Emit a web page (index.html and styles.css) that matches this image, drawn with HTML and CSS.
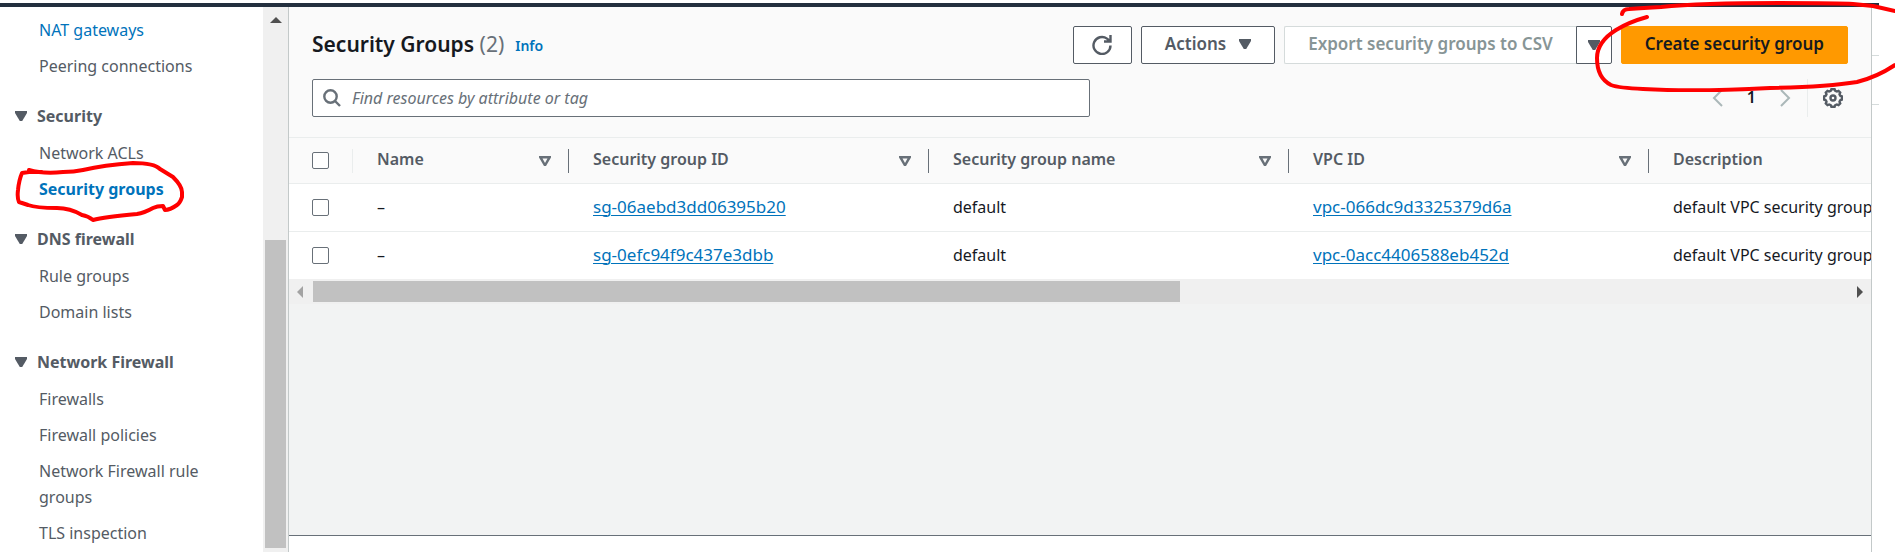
FILE: index.html
```html
<!DOCTYPE html>
<html lang="en">
<head>
<meta charset="utf-8">
<title>Security Groups</title>
<link rel="stylesheet" href="styles.css">
</head>
<body>
<div class="topbar"></div>
<div class="layout">
  <nav class="sidebar" aria-label="VPC navigation">
    <div class="nav-content">
      <ul class="nav-list">
        <li><a class="nav-link visited" href="#">NAT gateways</a></li>
        <li><a class="nav-link" href="#">Peering connections</a></li>
      </ul>
      <section class="nav-group">
        <button class="nav-heading" type="button"><svg class="caret" viewBox="0 0 12 10"><path d="M0 0h12v2L7.200 10H4.800L0 2z"/></svg>Security</button>
        <ul class="nav-list">
          <li><a class="nav-link" href="#">Network ACLs</a></li>
          <li class="marked"><a class="nav-link active" href="#">Security groups</a>
            <svg class="mark mark-nav" viewBox="0 0 170 62"><path d="M15 10Q29 14 49 12Q60 12 69 10Q90 5 119 3Q140 3 146 9L159 17Q168 26 168 32V37Q166 43 163 45Q156 50 151 50L149 46Q143 46 139 48Q130 53 123 54Q90 57 79 60Q74 56 68 55Q56 48 43 48Q22 48 14 45L5 42Q3 38 4 30Q5 20 8 13L15 12L28 12"/></svg>
          </li>
        </ul>
      </section>
      <section class="nav-group">
        <button class="nav-heading" type="button"><svg class="caret" viewBox="0 0 12 10"><path d="M0 0h12v2L7.200 10H4.800L0 2z"/></svg>DNS firewall</button>
        <ul class="nav-list">
          <li><a class="nav-link" href="#">Rule groups</a></li>
          <li><a class="nav-link" href="#">Domain lists</a></li>
        </ul>
      </section>
      <section class="nav-group">
        <button class="nav-heading" type="button"><svg class="caret" viewBox="0 0 12 10"><path d="M0 0h12v2L7.200 10H4.800L0 2z"/></svg>Network Firewall</button>
        <ul class="nav-list">
          <li><a class="nav-link" href="#">Firewalls</a></li>
          <li><a class="nav-link" href="#">Firewall policies</a></li>
          <li><a class="nav-link" href="#">Network Firewall rule groups</a></li>
          <li><a class="nav-link" href="#">TLS inspection</a></li>
        </ul>
      </section>
    </div>
    <div class="vscroll">
      <svg class="arrow-up" viewBox="0 0 12 6"><path d="M0 6L6 0L12 6z"/></svg>
      <div class="vthumb"></div>
    </div>
  </nav>

  <main class="main">
    <header class="panel-header">
      <div class="title-row">
        <h1 class="title">Security Groups <span class="count">(2)</span></h1>
        <a class="info" href="#">Info</a>
        <div class="actions">
          <button class="btn btn-icon" type="button" aria-label="Refresh">
            <svg class="icon" viewBox="0 0 20 20"><path d="M18.500 10.500A8.500 8.500 0 1 1 15 3.600L18 6M18.500 0V6.500H12"/></svg>
          </button>
          <button class="btn btn-actions" type="button">Actions<svg class="caret" viewBox="0 0 12 10"><path d="M0 0h12v2L7.200 10H4.800L0 2z"/></svg></button>
          <div class="split">
            <button class="btn btn-export" type="button" disabled>Export security groups to CSV</button>
            <button class="btn btn-more" type="button" aria-label="More export options"><svg class="caret" viewBox="0 0 12 10"><path d="M0 0h12v2L7.200 10H4.800L0 2z"/></svg></button>
          </div>
          <button class="btn btn-primary" type="button">Create security group</button>
          <svg class="mark mark-create" viewBox="0 0 300 92"><path d="M27 14Q28 9 34 9Q48 8 66 7Q105 3 185 3Q245 3 258 4L278 6L300 11M52 17Q34 22 21 30Q2 42 2 58Q2 78 16 85Q24 88 48 89Q100 92 175 88Q232 87 262 82Q282 77 300 65"/></svg>
        </div>
      </div>
      <div class="filter-row">
        <label class="search">
          <svg class="icon search-icon" viewBox="0 0 18 18"><circle cx="7.500" cy="7.500" r="6.200"/><path d="M12 12L17 17"/></svg>
          <input class="search-input" type="text" placeholder="Find resources by attribute or tag" aria-label="Find resources">
        </label>
        <div class="pager">
          <button class="page-btn" type="button" aria-label="Previous page"><svg viewBox="0 0 11 18"><path d="M10 1L2 9L10 17"/></svg></button>
          <span class="page-num">1</span>
          <button class="page-btn" type="button" aria-label="Next page"><svg viewBox="0 0 11 18"><path d="M1 1L9 9L1 17"/></svg></button>
          <button class="settings" type="button" aria-label="Preferences">
            <svg class="icon" viewBox="0 0 20 20"><path d="M8.400 1.200h3.200l.7 1.700 1.500.6 1.700-.7 1.700 1.700-.7 1.700.6 1.500 1.700.7v3.200l-1.700.7-.6 1.500.7 1.700-1.700 1.700-1.700-.7-1.500.6-.7 1.700H8.400l-.7-1.700-1.500-.6-1.700.7-1.700-1.700.7-1.700-.6-1.500-1.700-.7V8.400l1.700-.7.6-1.500-.7-1.700 1.700-1.700 1.700.7 1.500-.6z"/><circle cx="10" cy="10" r="2.500"/></svg>
          </button>
        </div>
      </div>
    </header>

    <div class="table-wrap">
      <table class="grid">
        <colgroup><col class="col-check"><col class="col-name"><col class="col-wide"><col class="col-wide"><col class="col-wide"><col class="col-wide"></colgroup>
        <thead>
          <tr>
            <th class="check light"><input type="checkbox" aria-label="Select all"></th>
            <th><div class="th"><span>Name</span><svg class="sort" viewBox="0 0 12 10"><path d="M0 0h12v1.500L7 10H5L0 1.500zM3.500 2.600L6 7L8.500 2.600z"/></svg></div></th>
            <th><div class="th"><span>Security group ID</span><svg class="sort" viewBox="0 0 12 10"><path d="M0 0h12v1.500L7 10H5L0 1.500zM3.500 2.600L6 7L8.500 2.600z"/></svg></div></th>
            <th><div class="th"><span>Security group name</span><svg class="sort" viewBox="0 0 12 10"><path d="M0 0h12v1.500L7 10H5L0 1.500zM3.500 2.600L6 7L8.500 2.600z"/></svg></div></th>
            <th><div class="th"><span>VPC ID</span><svg class="sort" viewBox="0 0 12 10"><path d="M0 0h12v1.500L7 10H5L0 1.500zM3.500 2.600L6 7L8.500 2.600z"/></svg></div></th>
            <th><div class="th"><span>Description</span></div></th>
          </tr>
        </thead>
        <tbody>
          <tr>
            <td class="check"><input type="checkbox" aria-label="Select sg-06aebd3dd06395b20"></td>
            <td>–</td>
            <td><a href="#">sg-06aebd3dd06395b20</a></td>
            <td>default</td>
            <td><a href="#">vpc-066dc9d3325379d6a</a></td>
            <td>default VPC security group</td>
          </tr>
          <tr>
            <td class="check"><input type="checkbox" aria-label="Select sg-0efc94f9c437e3dbb"></td>
            <td>–</td>
            <td><a href="#">sg-0efc94f9c437e3dbb</a></td>
            <td>default</td>
            <td><a href="#">vpc-0acc4406588eb452d</a></td>
            <td>default VPC security group</td>
          </tr>
        </tbody>
      </table>
    </div>
    <div class="hscroll">
      <svg class="arrow-side muted" viewBox="0 0 6 12"><path d="M6 0L0 6L6 12z"/></svg>
      <div class="htrack"><div class="hthumb"></div></div>
      <svg class="arrow-side" viewBox="0 0 6 12"><path d="M0 0L6 6L0 12z"/></svg>
    </div>
    <div class="split-panel"></div>
  </main>
  <aside class="gutter"><div class="tick tick-a"></div><div class="tick tick-b"></div></aside>
</div>
</body>
</html>
```
FILE: styles.css
```css
* { box-sizing: border-box; }

body {
  margin: 0;
  height: 100vh;
  display: flex;
  flex-direction: column;
  overflow: hidden;
  padding-top: 3px;
  background: #fff;
  color: #16191f;
  font: 16px/26px "Noto Sans", "Open Sans", sans-serif;
}

button, input { font: inherit; color: inherit; }
button { cursor: pointer; }

.topbar {
  flex: none;
  height: 4px;
  margin-right: 16px;
  background: #232f3e;
}

.layout { flex: 1; min-height: 0; display: flex; }

/* Navigation */
.sidebar {
  flex: none;
  width: 289px;
  display: flex;
  border-right: 1px solid #c3c9c9;
}

.nav-content { flex: 1; padding: 10px 32px 0 15px; color: #545b64; }
.nav-list {
  list-style: none;
  margin: 0;
  padding: 0 0 0 24px;
  display: flex;
  flex-direction: column;
  gap: 10px;
}
.nav-link { display: block; color: #545b64; text-decoration: none; }
.nav-link.visited { color: #0073bb; }
.nav-link.active { color: #0073bb; font-weight: 700; }
.nav-group { margin-top: 24px; }
.nav-heading {
  display: flex;
  align-items: center;
  gap: 10px;
  margin: 0 0 11px;
  padding: 0;
  border: 0;
  background: none;
  font-weight: 700;
}

.caret { width: 12px; height: 10px; fill: #545b64; }

.vscroll {
  flex: none;
  width: 25px;
  display: flex;
  flex-direction: column;
  align-items: center;
  justify-content: space-between;
  padding: 10px 0 4px;
  background: #f0f0f0;
}
.arrow-up { width: 12px; height: 6px; fill: #505050; }
.vthumb { width: 21px; height: 58%; background: #c1c1c1; }

/* Content */
.main {
  flex: 1;
  min-width: 0;
  display: flex;
  flex-direction: column;
  background: #f2f3f3;
  border-right: 1px solid #c3c9c9;
}
.panel-header {
  display: flex;
  flex-direction: column;
  gap: 15px;
  padding: 19px 23px 20px;
  background: #fafafa;
  border-bottom: 1px solid #eaeded;
}
.title-row { display: flex; align-items: center; }
.title { margin: 0; padding-bottom: 3px; font-size: 21px; line-height: 26px; font-weight: 600; }
.count { color: #687078; font-weight: 400; }
.info {
  margin-left: 11px;
  padding-top: 2px;
  color: #0073bb;
  font-size: 14px;
  font-weight: 600;
  text-decoration: none;
}

.actions { position: relative; display: flex; gap: 9px; margin-left: auto; }
.btn {
  display: flex;
  align-items: center;
  justify-content: center;
  height: 38px;
  padding: 0 23px 2px;
  border: 1px solid #545b64;
  border-radius: 2px;
  background: #fff;
  color: #545b64;
  font-size: 17px;
  font-weight: 600;
  white-space: nowrap;
}
.btn-icon { width: 59px; padding: 0; }
.btn-actions { gap: 13px; }
.split { display: flex; }
.btn-export { border-color: #d5dbdb; border-right: 0; color: #879596; border-radius: 2px 0 0 2px; cursor: default; }
.btn-more { width: 36px; padding: 0; border-radius: 0 2px 2px 0; }
.btn-primary { border-color: #f90; background: #f90; color: #16191f; }

.icon { width: 20px; height: 20px; fill: none; stroke: #545b64; stroke-width: 2.4; }

.filter-row { display: flex; justify-content: space-between; align-items: center; }
.search {
  display: flex;
  align-items: center;
  gap: 11px;
  width: calc(50% + 10px);
  height: 38px;
  padding: 0 10px;
  border: 1px solid #687078;
  border-radius: 2px;
  background: #fff;
}
.search-icon { width: 18px; height: 18px; stroke: #687078; }
.search-input { flex: 1; min-width: 0; padding: 0; border: 0; outline: 0; background: none; }
.search-input::placeholder { color: #687078; font-style: italic; opacity: 1; }

.pager { display: flex; align-items: center; height: 38px; }
.page-btn { display: flex; padding: 0; border: 0; background: none; }
.page-btn svg { width: 11px; height: 18px; fill: none; stroke: #aab7b8; stroke-width: 2; }
.page-num { padding: 0 24px 2px; font-size: 16px; font-weight: 600; }
.settings {
  display: flex;
  align-items: center;
  align-self: stretch;
  margin-left: 16px;
  padding: 0 5px 0 15px;
  border: 0;
  border-left: 1px solid #eaeded;
  background: none;
}

/* Table */
.table-wrap { overflow: hidden; }
.grid { table-layout: fixed; width: 1720px; border-collapse: separate; border-spacing: 0; background: #fff; }
.col-check { width: 64px; }
.col-name { width: 216px; }
.col-wide { width: 360px; }
th, td { text-align: left; white-space: nowrap; border-bottom: 1px solid #eaeded; }
th { height: 46px; padding: 0; background: #fafafa; color: #545b64; font-weight: 600; }
.th {
  display: flex;
  align-items: center;
  justify-content: space-between;
  height: 24px;
  padding: 0 17px 0 24px;
  border-right: 1px solid #687078;
}
.th span { padding-bottom: 3px; }
td { height: 48px; padding: 0 24px 2px; }
td a { color: #0073bb; font-size: 17px; text-decoration: underline; text-decoration-thickness: 1px; text-underline-offset: 2px; }
tbody tr:last-child td { height: 47px; border-bottom: 0; }
.check { padding: 0 0 0 23px; }
th.light { background: linear-gradient(#eaeded, #eaeded) right center / 1px 24px no-repeat #fafafa; }
.check input {
  display: block;
  appearance: none;
  width: 17px;
  height: 17px;
  margin: 0;
  border: 1px solid #687078;
  border-radius: 2px;
  background: #fff;
}
.sort { width: 12px; height: 10px; fill: #687078; fill-rule: evenodd; }

.hscroll {
  display: flex;
  align-items: center;
  gap: 10px;
  height: 25px;
  padding: 0 8px;
  background: #f0f0f0;
}
.arrow-side { flex: none; width: 6px; height: 12px; fill: #505050; }
.arrow-side.muted { fill: #a3a3a3; }
.htrack { flex: 1; }
.hthumb { width: calc(56% + 8px); height: 21px; background: #c1c1c1; }
.split-panel { height: 17px; margin-top: auto; border-top: 1px solid #687078; background: #fff; }

.gutter { flex: none; width: 23px; padding-top: 48px; }
.tick { width: 7px; height: 1px; background: #d5dbdb; }
.tick-b { margin-top: 48px; }

/* Hand-drawn highlights */
.marked { position: relative; }
.mark { position: absolute; fill: none; stroke: #f00; stroke-width: 4; stroke-linecap: round; stroke-linejoin: round; pointer-events: none; }
.mark-nav { left: -25px; top: -16px; width: 170px; height: 62px; }
.mark-create { right: -47px; top: -26px; width: 300px; height: 92px; }
```
